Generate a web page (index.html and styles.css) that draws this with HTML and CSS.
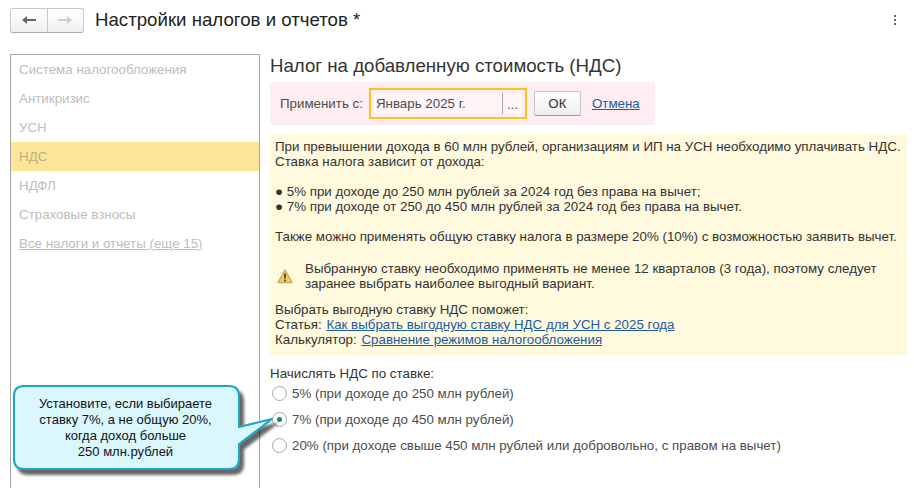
FILE: index.html
```html
<!DOCTYPE html>
<html lang="ru">
<head>
<meta charset="utf-8">
<title>Настройки налогов и отчетов</title>
<link rel="stylesheet" href="styles.css">
</head>
<body>
<div class="page">
  <header class="topbar">
    <div class="navgroup">
      <button class="navbtn navbtn-back"><svg width="14" height="10" viewBox="0 0 14 10"><path d="M0 5 L5 1 V4 H14 V6 H5 V9 Z" fill="#666"/></svg></button>
      <button class="navbtn navbtn-fwd"><svg width="14" height="10" viewBox="0 0 14 10"><path d="M14 5 L9 1 V4 H0 V6 H9 V9 Z" fill="#ccc"/></svg></button>
    </div>
    <h1 class="title">Настройки налогов и отчетов *</h1>
    <div class="more"><i></i><i></i><i></i></div>
  </header>
  <main class="content">
    <nav class="sidebar">
      <div class="side-item">Система налогообложения</div>
      <div class="side-item">Антикризис</div>
      <div class="side-item">УСН</div>
      <div class="side-item active">НДС</div>
      <div class="side-item">НДФЛ</div>
      <div class="side-item">Страховые взносы</div>
      <div class="side-item underline">Все налоги и отчеты (еще 15)</div>
    </nav>
    <section class="panel">
      <h2 class="heading">Налог на добавленную стоимость (НДС)</h2>
      <div class="applybar">
        <span class="applylabel">Применить с:</span>
        <div class="field"><span class="field-value">Январь 2025 г.</span><span class="field-btn">...</span></div>
        <button class="okbtn">ОК</button>
        <a class="link cancel">Отмена</a>
      </div>
      <div class="note">
        <p>При превышении дохода в 60 млн рублей, организациям и ИП на УСН необходимо уплачивать НДС.<br>Ставка налога зависит от дохода:</p>
        <p>● 5% при доходе до 250 млн рублей за 2024 год без права на вычет;<br>● 7% при доходе от 250 до 450 млн рублей за 2024 год без права на вычет.</p>
        <p>Также можно применять общую ставку налога в размере 20% (10%) с возможностью заявить вычет.</p>
        <div class="warning">
          <svg class="warn-icon" width="16" height="15" viewBox="0 0 16 15"><path d="M8 1 L15 13.5 H1 Z" fill="#f0cf62" stroke="#c9ab52" stroke-width="1.4" stroke-linejoin="round"/><rect x="7.1" y="4.5" width="1.8" height="5" fill="#444"/><rect x="7.1" y="10.5" width="1.8" height="1.8" fill="#444"/></svg>
          <span>Выбранную ставку необходимо применять не менее 12 кварталов (3 года), поэтому следует<br>заранее выбрать наиболее выгодный вариант.</span>
        </div>
        <p class="last">Выбрать выгодную ставку НДС поможет:<br>Статья: <a class="link note-link">Как выбрать выгодную ставку НДС для УСН с 2025 года</a><br>Калькулятор: <a class="link note-link">Сравнение режимов налогообложения</a></p>
      </div>
      <div class="rates">
        <div class="rates-title">Начислять НДС по ставке:</div>
        <div class="radio"><span class="dot"></span>5% (при доходе до 250 млн рублей)</div>
        <div class="radio"><span class="dot on"></span>7% (при доходе до 450 млн рублей)</div>
        <div class="radio"><span class="dot"></span>20% (при доходе свыше 450 млн рублей или добровольно, с правом на вычет)</div>
      </div>
    </section>
  </main>
  <div class="callout">
    <svg class="callout-shape" width="290" height="100" viewBox="0 0 290 100">
      <defs><filter id="sh" x="-10%" y="-10%" width="120%" height="130%"><feDropShadow dx="4" dy="5" stdDeviation="1.8" flood-color="#000" flood-opacity=".6"/></filter></defs>
      <path filter="url(#sh)" d="M24 6 H229 Q239 6 239 16 V47 L272 39 L239 64 V79 Q239 89 229 89 H24 Q14 89 14 79 V16 Q14 6 24 6 Z" fill="#d9f7fd" stroke="#1ba5c4" stroke-width="2" stroke-linejoin="round"/>
    </svg>
    <div class="callout-text">Установите, если выбираете<br>ставку 7%, а не общую 20%,<br>когда доход больше<br>250 млн.рублей</div>
  </div>
</div>
</body>
</html>
```
FILE: styles.css
```css
* { box-sizing: border-box; }
html, body { margin: 0; padding: 0; }
body { background: #fff; font-family: "Liberation Sans", Arial, sans-serif; font-size: 13.33px; color: #333; }
.page { position: relative; width: 914px; height: 488px; overflow: hidden; }
.topbar { display: flex; align-items: center; height: 54px; padding: 0 18px 14px 10px; }
.navgroup { display: flex; width: 74px; height: 25px; border: 1px solid #c9c9c9; border-bottom-color: #aaa; border-radius: 3px; background: linear-gradient(#fff, #f0f0f0); }
.navbtn { flex: 1; padding: 0; border: 0; background: none; display: flex; align-items: center; justify-content: center; }
.navbtn-back { border-right: 1px solid #c9c9c9; }
.title { margin: 0 0 0 11px; flex: 1; font-size: 18.67px; font-weight: 400; color: #222; }
.more { display: flex; flex-direction: column; gap: 2px; width: 2px; }
.more i { display: block; width: 2px; height: 2px; background: #666; }
.content { display: flex; height: 434px; padding-left: 10px; }
.sidebar { width: 250px; border: 1px solid #a6a6a6; border-bottom: 0; }
.side-item { height: 29px; line-height: 29px; padding-left: 8px; color: #bdbdbd; }
.side-item.active { background: #fde598; color: #bfae7e; }
.side-item.underline { text-decoration: underline; }
.panel { flex: 1; padding: 0 0 0 10px; }
.heading { margin: 0; height: 28px; padding-top: 1px; font-size: 18.67px; line-height: 21px; font-weight: 400; color: #333; }
.applybar { display: flex; align-items: center; width: 385px; height: 43px; background: #feedf1; padding-left: 10px; }
.applylabel { color: #4d4d4d; }
.field { display: flex; align-items: center; width: 158px; height: 31px; margin-left: 6px; border: 2px solid #fcc21d; background: #feedf1; padding: 3px; }
.field-value { flex: 1; align-self: stretch; background: #fff5f7; line-height: 21px; padding-left: 2px; color: #4d4d4d; }
.field-btn { width: 20px; border-left: 1px solid #a6a6a6; height: 21px; text-align: center; line-height: 24px; color: #555; background: #fff5f7; }
.okbtn { width: 47px; height: 25px; margin-left: 7px; border: 1px solid #c4c4c4; border-bottom-color: #999; border-radius: 2px; background: linear-gradient(#fff, #eee); font: 13.33px "Liberation Sans", Arial, sans-serif; color: #333; padding: 0; }
.link { color: #1a5ba8; text-decoration: underline; }
.note-link { margin-left: 1px; }
.cancel { margin-left: 11px; }
.note { width: 637px; height: 221px; margin-top: 9px; background: #fff9de; padding: 5px 0 0 5px; line-height: 15px; color: #333; }
.note p { margin: 0 0 15px; }
.note p.last { margin: 0; }
.warning { display: flex; align-items: center; height: 32px; padding-top: 2px; margin-bottom: 11px; }
.warn-icon { margin: 0 12px 0 2px; flex: none; }
.rates { margin-top: 10px; }
.rates-title { line-height: 17px; height: 15px; }
.radio { display: flex; align-items: center; height: 26px; color: #4d4d4d; }
.dot { position: relative; width: 15px; height: 15px; margin: 0 5px 0 2px; border: 1px solid #a8a8a8; border-radius: 50%; background: #fff; }
.dot.on::after { content: ""; position: absolute; left: 4px; top: 4px; width: 5px; height: 5px; border-radius: 50%; background: #0b9150; }
.callout { position: absolute; left: 0; top: 380px; width: 290px; height: 100px; }
.callout-shape { display: block; }
.callout-text { position: absolute; left: 13px; top: 16px; width: 225px; text-align: center; font-size: 13px; line-height: 16px; color: #111; }
```
